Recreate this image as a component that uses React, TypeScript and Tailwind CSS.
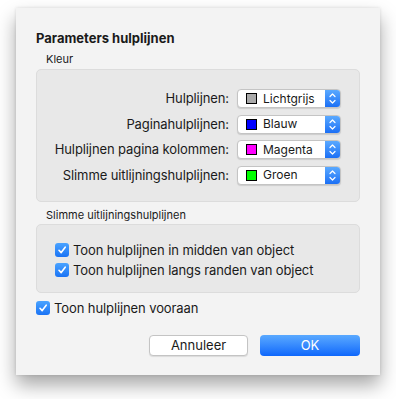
import React from 'react';

const ROWS = [
  { label: 'Hulplijnen:', name: 'Lichtgrijs', color: '#aaaaaa' },
  { label: 'Paginahulplijnen:', name: 'Blauw', color: '#0000ff' },
  { label: 'Hulplijnen pagina kolommen:', name: 'Magenta', color: '#ff00ff' },
  { label: 'Slimme uitlijningshulplijnen:', name: 'Groen', color: '#00ff00' },
];

function Check() {
  return (
    <span className="w-[14px] h-[14px] rounded-[3px] bg-gradient-to-b from-[#4aa3ff] to-[#1a73f5] flex items-center justify-center shrink-0">
      <svg width="10" height="10" viewBox="0 0 10 10">
        <path d="M2 5.3 L4.2 7.6 L8.2 2.2" fill="none" stroke="white" strokeWidth="1.6" strokeLinecap="round" strokeLinejoin="round" />
      </svg>
    </span>
  );
}

function Popup({ name, color }: { name: string; color: string }) {
  return (
    <div className="w-[104px] h-[19px] flex rounded-[4px] bg-white border border-[#c4c4c4] shadow-[0_1px_1px_rgba(0,0,0,0.12)] overflow-hidden">
      <div className="flex-1 flex items-center pl-[8px] gap-[6px]">
        <span className="w-[11px] h-[11px] border border-black" style={{ background: color }} />
        <span className="text-[12px] text-[#1a1a1a]">{name}</span>
      </div>
      <div className="w-[15px] bg-gradient-to-b from-[#5aa9ff] to-[#1b6ff5] flex items-center justify-center">
        <svg width="9" height="13" viewBox="0 0 9 13">
          <path d="M2 4.5 L4.5 2 L7 4.5 M2 8.5 L4.5 11 L7 8.5" fill="none" stroke="white" strokeWidth="1.2" strokeLinecap="round" strokeLinejoin="round" />
        </svg>
      </div>
    </div>
  );
}

export default function App() {
  return (
    <div className="w-[396px] h-[399px] bg-white pt-[8px] pl-[16px] font-['Inter','Liberation_Sans',sans-serif] text-[#1a1a1a]">
      <div className="w-[364px] h-[367px] bg-[#f3f3f3] shadow-[0_10px_18px_rgba(0,0,0,0.35),0_0_3px_rgba(0,0,0,0.12)] pt-[22px] px-[20px]">
        <div className="text-[13px] font-bold leading-[16px]">Parameters hulplijnen</div>

        <div className="text-[11px] leading-[13px] pl-[10px] mt-[7px]">Kleur</div>
        <div className="mt-[3px] h-[133px] rounded-[5px] bg-[#e8e8e8] border border-[#dcdcdc] pt-[19px] pr-[18px] flex flex-col gap-[6px]">
          {ROWS.map((r) => (
            <div key={r.label} className="flex items-center justify-end gap-[8px]">
              <span className="text-[13px] tracking-[-0.1px]">{r.label}</span>
              <Popup name={r.name} color={r.color} />
            </div>
          ))}
        </div>

        <div className="text-[11px] leading-[13px] pl-[10px] mt-[7px]">Slimme uitlijningshulplijnen</div>
        <div className="mt-[2px] h-[69px] rounded-[5px] bg-[#e8e8e8] border border-[#dcdcdc] pt-[18px] pl-[18px] flex flex-col gap-[6px]">
          <label className="flex items-center gap-[4px] text-[13px] leading-[14px] tracking-[-0.1px]">
            <Check />
            Toon hulplijnen in midden van object
          </label>
          <label className="flex items-center gap-[4px] text-[13px] leading-[14px] tracking-[-0.1px]">
            <Check />
            Toon hulplijnen langs randen van object
          </label>
        </div>

        <label className="mt-[8px] flex items-center gap-[4px] text-[13px] leading-[14px] tracking-[-0.1px]">
          <Check />
          Toon hulplijnen vooraan
        </label>

        <div className="mt-[20px] flex justify-end gap-[12px]">
          <button className="w-[99px] h-[21px] rounded-[4px] bg-white border border-[#c4c4c4] shadow-[0_1px_1px_rgba(0,0,0,0.1)] text-[13px]">
            Annuleer
          </button>
          <button className="w-[100px] h-[21px] rounded-[4px] bg-gradient-to-b from-[#5aa9ff] to-[#0d66fb] text-white text-[13px]">
            OK
          </button>
        </div>
      </div>
    </div>
  );
}
